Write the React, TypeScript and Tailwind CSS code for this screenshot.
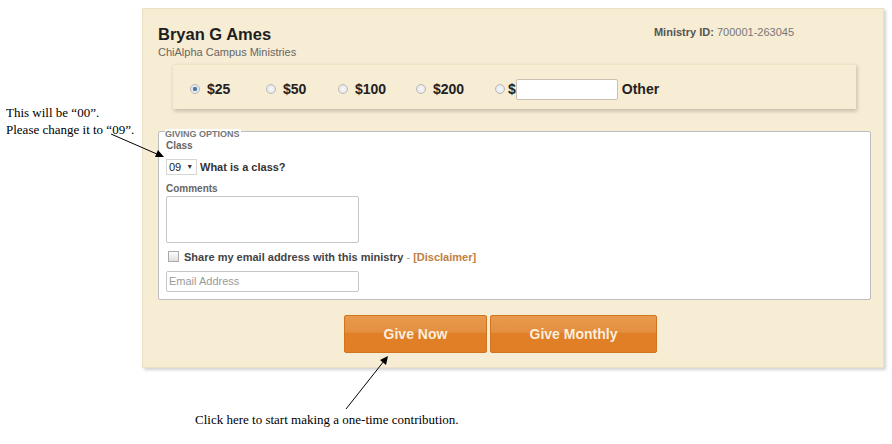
import React from "react";

const Radio = ({ checked }: { checked?: boolean }) => (
  <span
    className={`inline-block w-[10px] h-[10px] rounded-full border border-[#b9b9b9] ${
      checked ? "bg-[radial-gradient(circle,#3e6f99_0%,#5d87ad_35%,#dfe6ec_45%,#f4f4f4_100%)]" : "bg-[radial-gradient(circle,#f8f8f8_0%,#e2e2e2_100%)]"
    }`}
  />
);

export default function App() {
  const amounts = [
    { v: "$25", checked: true, w: "w-[76px]" },
    { v: "$50", w: "w-[72px]" },
    { v: "$100", w: "w-[78px]" },
    { v: "$200", w: "w-[79px]" },
  ];
  return (
    <div className="relative w-[892px] h-[444px] bg-white overflow-hidden font-['Liberation_Sans',Arial,sans-serif]">
      <div className="pl-[142px] pt-[8px]">
        <div className="w-[742px] h-[360px] bg-[#f7ecd4] border border-[#ebe0c6] shadow-[2px_2px_3px_rgba(0,0,0,0.18)] pl-[15px] pr-[12px] pt-[15px]">
          <div className="flex justify-between">
            <div>
              <div className="text-[16.5px] font-bold text-[#1e1e1e] leading-[20px]">Bryan G Ames</div>
              <div className="text-[11px] text-[#666] leading-[14px] mt-[1px]">ChiAlpha Campus Ministries</div>
            </div>
            <div className="text-[11px] leading-[14px] mt-[1px] mr-[77px]">
              <span className="font-bold text-[#555]">Ministry ID:</span>{" "}
              <span className="text-[#777]">700001-263045</span>
            </div>
          </div>
          <div className="ml-[15px] mt-[5px] w-[683px] h-[45px] bg-[#f7ecd4] shadow-[1px_2px_4px_rgba(0,0,0,0.22)] border-t border-[#f0e3c4] flex items-center pl-[17px] pt-[4px]">
            {amounts.map((a) => (
              <div key={a.v} className={`flex items-center ${a.w}`}>
                <Radio checked={a.checked} />
                <span className="ml-[7px] text-[14px] font-bold text-[#222]">{a.v}</span>
              </div>
            ))}
            <div className="flex items-center">
              <Radio />
              <span className="ml-[3px] text-[14px] font-bold text-[#222]">$</span>
              <div className="w-[102px] h-[21px] bg-white border border-[#c9c2b2] rounded-[2px]" />
              <span className="ml-[4px] text-[14px] font-bold text-[#222]">Other</span>
            </div>
          </div>
          <div className="relative mt-[22px] w-[713px] h-[169px] bg-white border border-[#bdbdbd] rounded-[2px] pl-[7px] pt-[8px]">
            <div className="absolute left-[6px] top-[-3px] bg-white pr-[1px] text-[9px] font-bold text-[#777] leading-[11px]">GIVING OPTIONS</div>
            <div className="text-[10px] font-bold text-[#666] leading-[12px]">Class</div>
            <div className="flex items-center mt-[7px]">
              <div className="w-[31px] h-[16px] border border-[#d6d6d6] flex items-center pl-[2px] text-[11px] text-[#222]">
                09
                <span className="ml-[5px] text-[7px] text-[#333]">▼</span>
              </div>
              <span className="ml-[3px] text-[11px] font-bold text-[#333]">What is a class?</span>
            </div>
            <div className="mt-[7px] text-[10px] font-bold text-[#666] leading-[12px]">Comments</div>
            <div className="mt-[1px] w-[193px] h-[47px] border border-[#c6c6c6] rounded-[2px]" />
            <div className="flex items-center mt-[6px] ml-[2px]">
              <span className="w-[11px] h-[11px] border border-[#aaa] bg-[linear-gradient(#fdfdfd,#e0e0e0)]" />
              <span className="ml-[5px] text-[11px] font-bold text-[#444]">Share my email address with this ministry</span>
              <span className="ml-[3px] text-[11px] text-[#999]">-</span>
              <span className="ml-[3px] text-[11px] font-bold text-[#c08040]">[Disclaimer]</span>
            </div>
            <div className="mt-[6px] w-[193px] h-[21px] border border-[#c6c6c6] rounded-[2px] flex items-center pl-[2px] text-[11px] text-[#9a9a9a]">
              Email Address
            </div>
          </div>
          <div className="flex mt-[15px] ml-[186px] gap-[3px]">
            <button className="w-[143px] h-[38px] rounded-[2px] border border-[#d27320] bg-[linear-gradient(#e89a4e_0%,#e48f40_45%,#e07f26_48%,#e07f26_100%)] text-[14px] font-bold text-[#fbeedd] font-['Liberation_Sans',Arial,sans-serif]">
              Give Now
            </button>
            <button className="w-[167px] h-[38px] rounded-[2px] border border-[#d27320] bg-[linear-gradient(#e89a4e_0%,#e48f40_45%,#e07f26_48%,#e07f26_100%)] text-[14px] font-bold text-[#fbeedd] font-['Liberation_Sans',Arial,sans-serif]">
              Give Monthly
            </button>
          </div>
        </div>
      </div>

      <div className="absolute left-[6px] top-[104px] font-['Liberation_Serif','Times_New_Roman',serif] text-[13px] leading-[17px] text-black">
        <div>This will be “00”.</div>
        <div>Please change it to “09”.</div>
      </div>
      <div className="absolute left-[195px] top-[411px] font-['Liberation_Serif','Times_New_Roman',serif] text-[13px] leading-[17px] text-black">
        Click here to start making a one-time contribution.
      </div>
      <svg className="absolute left-0 top-0 pointer-events-none" width="892" height="444">
        <line x1="111" y1="134" x2="158" y2="154.5" stroke="#000" strokeWidth="1" />
        <polygon points="164,157 155,157 158,150" fill="#000" />
        <line x1="346" y1="409" x2="384" y2="361" stroke="#000" strokeWidth="1" />
        <polygon points="388,356 386,365 380,360" fill="#000" />
      </svg>
    </div>
  );
}
